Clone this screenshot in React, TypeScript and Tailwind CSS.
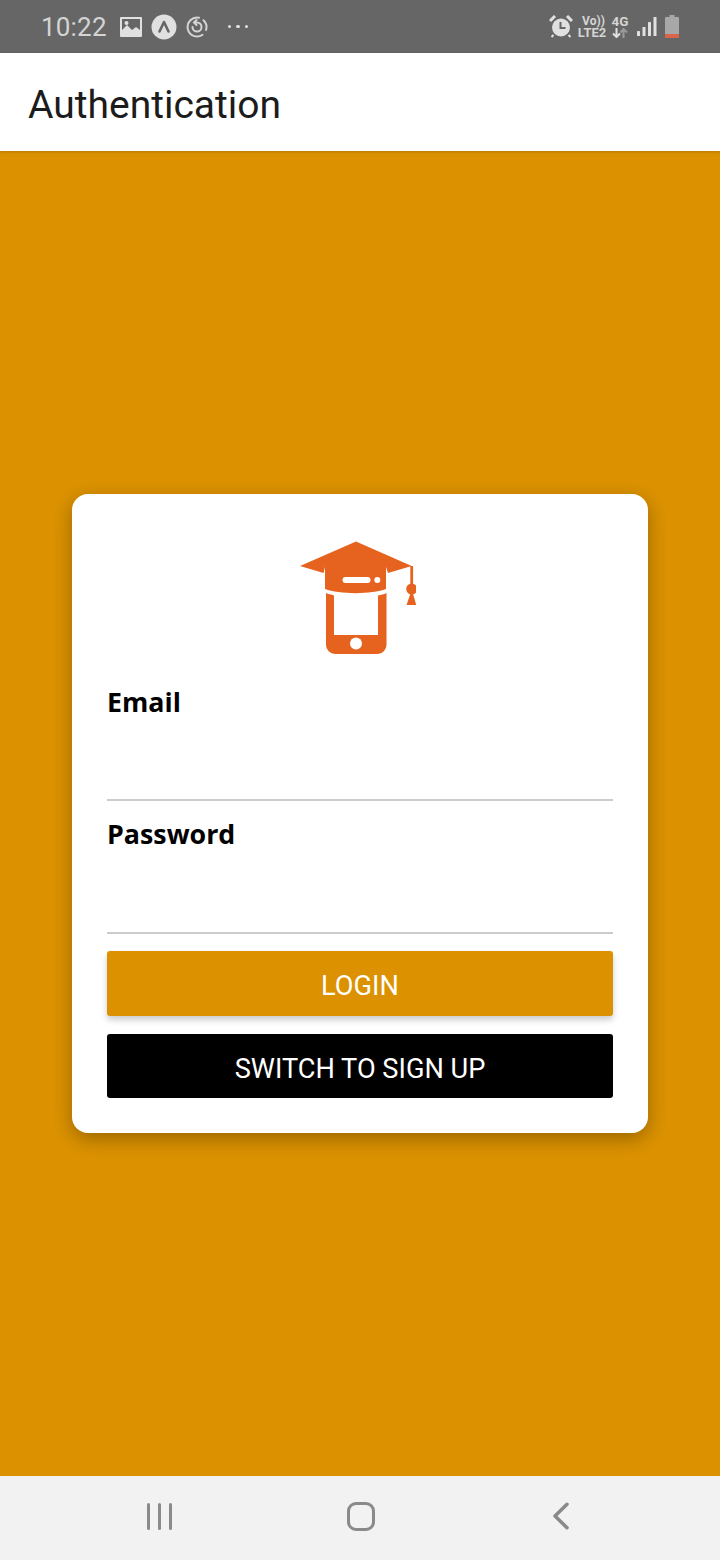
const roboto = "font-['Roboto',sans-serif]"

function StatusBar() {
  return (
    <div className={`flex h-[53px] items-center bg-[#666666] text-[#d4d4d4] ${roboto}`}>
      <span className="ml-[41px] text-[26px] leading-none tracking-[0.2px]">10:22</span>
      <div className="ml-[13px] flex items-center">
        <svg width="22" height="20" viewBox="0 0 22 20">
          <path fillRule="evenodd" fill="#e0e0e0" d="M1 0h20a1 1 0 0 1 1 1v18a1 1 0 0 1-1 1H1a1 1 0 0 1-1-1V1a1 1 0 0 1 1-1zM2 2v11l5-5 5 5 4-3 4 3V2z" />
          <circle cx="6.5" cy="6" r="2" fill="#e0e0e0" />
        </svg>
        <svg className="ml-[9px]" width="26" height="26" viewBox="0 0 26 26">
          <circle cx="13" cy="13" r="12.5" fill="#e0e0e0" />
          <path d="M8.5 17.5L13 8l4.5 9.5" fill="none" stroke="#666666" strokeWidth="2.6" strokeLinecap="round" strokeLinejoin="round" />
        </svg>
        <svg className="ml-[9px]" width="22" height="22" viewBox="0 0 22 22" fill="none" stroke="#d4d4d4" strokeWidth="2" strokeLinecap="round">
          <path d="M13 1.700A9.500 9.500 0 1 0 16.500 18.800" />
          <path d="M17.500 4.200A9.500 9.500 0 0 1 20 14" />
          <path d="M8.500 6.500H11a4.500 4.500 0 1 1-4.500 4.500" />
          <path d="M10.500 4L8 6.500 10.500 9" />
        </svg>
        <div className="ml-[20px] flex gap-[5px]">
          <span className="h-[3.500px] w-[3.500px] rounded-full bg-[#e0e0e0]" />
          <span className="h-[3.500px] w-[3.500px] rounded-full bg-[#e0e0e0]" />
          <span className="h-[3.500px] w-[3.500px] rounded-full bg-[#e0e0e0]" />
        </div>
      </div>
      <div className="ml-auto mr-[41px] flex items-center">
        <svg width="24" height="23" viewBox="0 0 24 23">
          <circle cx="12" cy="12.500" r="9" fill="#e0e0e0" />
          <path d="M1 6l5-5M23 6l-5-5" stroke="#e0e0e0" strokeWidth="3" />
          <path d="M4.500 20l-2 2M19.500 20l2 2" stroke="#e0e0e0" strokeWidth="2" />
          <path d="M11.500 7v6h5" fill="none" stroke="#666666" strokeWidth="2" />
        </svg>
        <div className="ml-[5px] flex w-[28px] flex-col items-center font-bold leading-[12px]">
          <span className="pl-[3px] text-[12px]">Vo))</span>
          <span className="text-[13px]">LTE2</span>
        </div>
        <div className="ml-[5px] flex w-[18px] flex-col items-center">
          <span className="text-[13.500px] font-bold leading-[13px]">4G</span>
          <svg width="16" height="10" viewBox="0 0 16 10" fill="none" strokeWidth="2">
            <path d="M4.500 0v9M1 5.500L4.500 9 8 5.500" stroke="#e0e0e0" />
            <path d="M11.500 10V1M8.500 4.500L11.500 1l3.500 3.500" stroke="#999999" />
          </svg>
        </div>
        <svg className="ml-[8px]" width="20" height="21" viewBox="0 0 20 21" fill="#e0e0e0">
          <rect x="0" y="15" width="3" height="5" rx="0.500" />
          <rect x="5.500" y="11" width="3" height="9" rx="0.500" />
          <rect x="11" y="6" width="3" height="14" rx="0.500" />
          <rect x="16.500" y="1" width="3" height="19" rx="0.500" />
        </svg>
        <svg className="ml-[8px]" width="14" height="23" viewBox="0 0 14 23">
          <path d="M4.500 0h5v2h3.500a1 1 0 0 1 1 1v19a1 1 0 0 1-1 1H1a1 1 0 0 1-1-1V3a1 1 0 0 1 1-1h3.500z" fill="#a8a8a8" />
          <path d="M0 19h14v3a1 1 0 0 1-1 1H1a1 1 0 0 1-1-1z" fill="#d8674a" />
        </svg>
      </div>
    </div>
  )
}

function Logo() {
  return (
    <svg className="ml-[191px] block" width="118" height="114" viewBox="298 541 118 114">
      <path d="M356 541.500L411.700 566 388 573 386 567V589c-14 5.500-47 5.500-61 0V567L323.500 573 300 566z" fill="#e5631f" />
      <path d="M326 593c2 1 5 1.600 8 2.500v39.500h44v-39.500c3-.4 6-1.200 8.500-2.500v52a9 9 0 0 1-9 9H335a9 9 0 0 1-9-9z" fill="#e5631f" />
      <rect x="342.500" y="577" width="28" height="6" rx="3" fill="#ffffff" />
      <circle cx="377.300" cy="580" r="3" fill="#ffffff" />
      <circle cx="356" cy="643.500" r="6" fill="#ffffff" />
      <path d="M410.300 566h2.800v20h-2.800z" fill="#e5631f" />
      <circle cx="411.700" cy="589" r="5.500" fill="#e5631f" />
      <path d="M411 592h1.500l3.700 13h-9.700z" fill="#e5631f" />
    </svg>
  )
}

function Field({ label, inputClass }: { label: string; inputClass: string }) {
  return (
    <div>
      <label className="block font-['Open_Sans',sans-serif] text-[26.800px] font-bold leading-[36px] text-black">
        {label}
      </label>
      <div className={`mt-[33px] border-b-2 border-[#cccccc] ${inputClass}`} />
    </div>
  )
}

export default function App() {
  return (
    <div className="flex h-[1560px] w-[720px] flex-col overflow-hidden bg-[#dc9200]">
      <StatusBar />
      <header className={`relative flex h-[98px] items-center bg-white pl-[28px] pt-[6px] shadow-[0_1px_3px_rgba(0,0,0,0.18)] ${roboto}`}>
        <h1 className="text-[39px] font-normal leading-none text-[#1c1c1c]">Authentication</h1>
      </header>
      <main className="flex flex-1 items-center justify-center">
        <div className="w-[576px] rounded-[16px] bg-white px-[35px] pt-[47px] pb-[35px] shadow-[0_6px_20px_rgba(0,0,0,0.3)]">
          <Logo />
          <div className="mt-[29px] flex flex-col gap-[15px]">
            <Field label="Email" inputClass="h-[48px]" />
            <Field label="Password" inputClass="h-[49px]" />
          </div>
          <div className={`mt-[17px] flex flex-col gap-[18px] ${roboto}`}>
            <button className="h-[65px] rounded-[3px] bg-[#dc9200] pt-[6px] text-[27.200px] text-white shadow-[0_4px_6px_rgba(0,0,0,0.2)]">
              LOGIN
            </button>
            <button className="h-[64px] rounded-[3px] bg-black pt-[6px] text-[27.200px] text-white">
              SWITCH TO SIGN UP
            </button>
          </div>
        </div>
      </main>
      <nav className="flex h-[84px] items-center bg-[#f2f2f2] pb-[4px]">
        <div className="ml-[146.700px] flex gap-[7.500px]">
          <span className="h-[27px] w-[3.500px] rounded-full bg-[#8a8a8a]" />
          <span className="h-[27px] w-[3.500px] rounded-full bg-[#8a8a8a]" />
          <span className="h-[27px] w-[3.500px] rounded-full bg-[#8a8a8a]" />
        </div>
        <div className="ml-[174.500px] h-[29px] w-[28.500px] rounded-[9px] border-[3.500px] border-[#8a8a8a]" />
        <svg className="ml-[178px]" width="16" height="30" viewBox="0 0 16 30" fill="none" stroke="#8a8a8a" strokeWidth="3.500" strokeLinecap="round" strokeLinejoin="round">
          <path d="M14 3.250L2 15l12 11.750" />
        </svg>
      </nav>
    </div>
  )
}
